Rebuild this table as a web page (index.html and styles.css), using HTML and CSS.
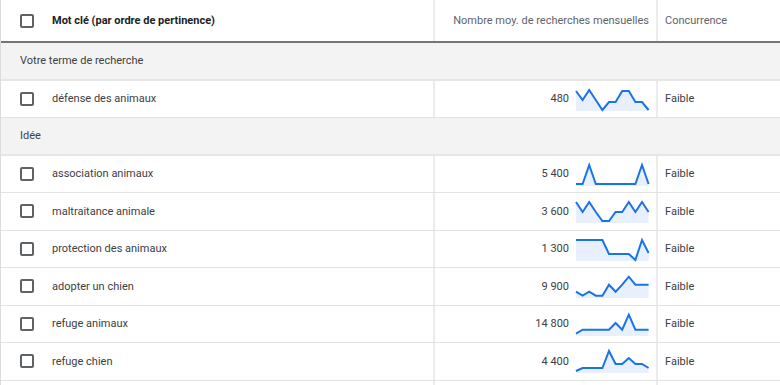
FILE: index.html
```html
<!DOCTYPE html>
<html lang="fr">
<head>
<meta charset="utf-8">
<title>Idées de mots clés</title>
<link rel="stylesheet" href="styles.css">
</head>
<body>
<div class="table">
  <div class="row head">
    <div class="cell kw"><span class="cb"></span><span class="kw-title">Mot clé (par ordre de pertinence)</span></div>
    <div class="cell vol">Nombre moy. de recherches mensuelles</div>
    <div class="cell comp">Concurrence</div>
  </div>

  <div class="group">Votre terme de recherche</div>
  <div class="row">
    <div class="cell kw"><span class="cb"></span><span>défense des animaux</span></div>
    <div class="cell vol"><span class="num">480</span>
      <svg class="spark" viewBox="0 0 73 24" width="73" height="24"><polygon class="area" points="0,24 0,4 6.6,13 13.2,3 19.8,13 26.4,23 33,15 39.6,15 46.2,4 52.8,4 59.4,15 66,15 72.6,23 72.6,24"/><polyline class="line" points="0,4 6.6,13 13.2,3 19.8,13 26.4,23 33,15 39.6,15 46.2,4 52.8,4 59.4,15 66,15 72.6,23"/></svg>
    </div>
    <div class="cell comp">Faible</div>
  </div>

  <div class="group">Idée</div>
  <div class="row">
    <div class="cell kw"><span class="cb"></span><span>association animaux</span></div>
    <div class="cell vol"><span class="num">5 400</span>
      <svg class="spark" viewBox="0 0 73 24" width="73" height="24"><polygon class="area" points="0,24 0,22 6.6,22 13.2,3 19.8,22 26.4,22 33,22 39.6,22 46.2,22 52.8,22 59.4,22 66,3 72.6,22 72.6,24"/><polyline class="line" points="0,22 6.6,22 13.2,3 19.8,22 26.4,22 33,22 39.6,22 46.2,22 52.8,22 59.4,22 66,3 72.6,22"/></svg>
    </div>
    <div class="cell comp">Faible</div>
  </div>
  <div class="row">
    <div class="cell kw"><span class="cb"></span><span>maltraitance animale</span></div>
    <div class="cell vol"><span class="num">3 600</span>
      <svg class="spark" viewBox="0 0 73 24" width="73" height="24"><polygon class="area" points="0,24 0,3 6.6,13 13.2,3 19.8,13 26.4,22 33,22 39.6,13 46.2,13 52.8,3 59.4,13 66,3 72.6,13 72.6,24"/><polyline class="line" points="0,3 6.6,13 13.2,3 19.8,13 26.4,22 33,22 39.6,13 46.2,13 52.8,3 59.4,13 66,3 72.6,13"/></svg>
    </div>
    <div class="cell comp">Faible</div>
  </div>
  <div class="row">
    <div class="cell kw"><span class="cb"></span><span>protection des animaux</span></div>
    <div class="cell vol"><span class="num">1 300</span>
      <svg class="spark" viewBox="0 0 73 24" width="73" height="24"><polygon class="area" points="0,24 0,3 6.6,3 13.2,3 19.8,3 26.4,3 33,17 39.6,17 46.2,17 52.8,17 59.4,23 66,3 72.6,16 72.6,24"/><polyline class="line" points="0,3 6.6,3 13.2,3 19.8,3 26.4,3 33,17 39.6,17 46.2,17 52.8,17 59.4,23 66,3 72.6,16"/></svg>
    </div>
    <div class="cell comp">Faible</div>
  </div>
  <div class="row">
    <div class="cell kw"><span class="cb"></span><span>adopter un chien</span></div>
    <div class="cell vol"><span class="num">9 900</span>
      <svg class="spark" viewBox="0 0 73 24" width="73" height="24"><polygon class="area" points="0,24 0,17.7 6.6,21.7 13.2,17.7 19.8,21.7 26.4,21.7 33,10.7 39.6,17.7 46.2,10.7 52.8,2.7 59.4,10.7 66,10.7 72.6,10.7 72.6,24"/><polyline class="line" points="0,17.7 6.6,21.7 13.2,17.7 19.8,21.7 26.4,21.7 33,10.7 39.6,17.7 46.2,10.7 52.8,2.7 59.4,10.7 66,10.7 72.6,10.7"/></svg>
    </div>
    <div class="cell comp">Faible</div>
  </div>
  <div class="row">
    <div class="cell kw"><span class="cb"></span><span>refuge animaux</span></div>
    <div class="cell vol"><span class="num">14 800</span>
      <svg class="spark" viewBox="0 0 73 24" width="73" height="24"><polygon class="area" points="0,24 0,21.7 6.6,17.7 13.2,17.7 19.8,17.7 26.4,17.7 33,17.7 39.6,11 46.2,17.7 52.8,2.7 59.4,17.7 66,17.7 72.6,17.7 72.6,24"/><polyline class="line" points="0,21.7 6.6,17.7 13.2,17.7 19.8,17.7 26.4,17.7 33,17.7 39.6,11 46.2,17.7 52.8,2.7 59.4,17.7 66,17.7 72.6,17.7"/></svg>
    </div>
    <div class="cell comp">Faible</div>
  </div>
  <div class="row">
    <div class="cell kw"><span class="cb"></span><span>refuge chien</span></div>
    <div class="cell vol"><span class="num">4 400</span>
      <svg class="spark" viewBox="0 0 73 24" width="73" height="24"><polygon class="area" points="0,24 0,22 6.6,19 13.2,19 19.8,19 26.4,19 33,2 39.6,15 46.2,15 52.8,9 59.4,15 66,15 72.6,19 72.6,24"/><polyline class="line" points="0,22 6.6,19 13.2,19 19.8,19 26.4,19 33,2 39.6,15 46.2,15 52.8,9 59.4,15 66,15 72.6,19"/></svg>
    </div>
    <div class="cell comp">Faible</div>
  </div>
  <div class="row">
    <div class="cell kw"></div>
    <div class="cell vol"></div>
    <div class="cell comp"></div>
  </div>
</div>
</body>
</html>
```

FILE: styles.css
```css
html, body {
  margin: 0;
  padding: 0;
  background: #ffffff;
  overflow: hidden;
}

body {
  font-family: Roboto, "Noto Sans", Arial, sans-serif;
  font-size: 11px;
  color: #3c4043;
}

.table {
  width: 780px;
  border-left: 1px solid #dadce0;
  box-sizing: border-box;
}

.row {
  display: grid;
  grid-template-columns: 434px 223px 1fr;
  height: 37.5px;
  box-sizing: border-box;
  border-bottom: 1px solid #e3e3e3;
}

.row.head {
  height: 43px;
  border-bottom: 2px solid #757575;
}

.cell {
  display: flex;
  align-items: center;
  box-sizing: border-box;
  min-width: 0;
  white-space: nowrap;
}

.cell.kw {
  padding-left: 19px;
  border-right: 2px solid #ececec;
}

.cell.vol {
  justify-content: flex-end;
  padding-right: 7px;
  border-right: 2px solid #ececec;
}

.cell.comp {
  padding-left: 7px;
}

.head .kw-title {
  font-weight: 700;
  color: #202124;
}

.head .vol,
.head .comp {
  color: #5f6368;
}

.cb {
  display: inline-block;
  width: 14px;
  height: 14px;
  box-sizing: border-box;
  border: 2px solid #5f6368;
  border-radius: 2px;
  margin-right: 18px;
  flex: none;
}

.num {
  margin-right: 7px;
}

.spark {
  display: block;
  overflow: visible;
  flex: none;
}

.spark .area {
  fill: #e8f0fe;
  stroke: none;
}

.spark .line {
  fill: none;
  stroke: #1a73e8;
  stroke-width: 2;
  stroke-linejoin: miter;
}

.group {
  height: 37.5px;
  box-sizing: border-box;
  display: flex;
  align-items: center;
  padding-left: 19px;
  background: #f3f3f3;
  border-bottom: 2px solid #e6e6e6;
  color: #3c4043;
}
```
